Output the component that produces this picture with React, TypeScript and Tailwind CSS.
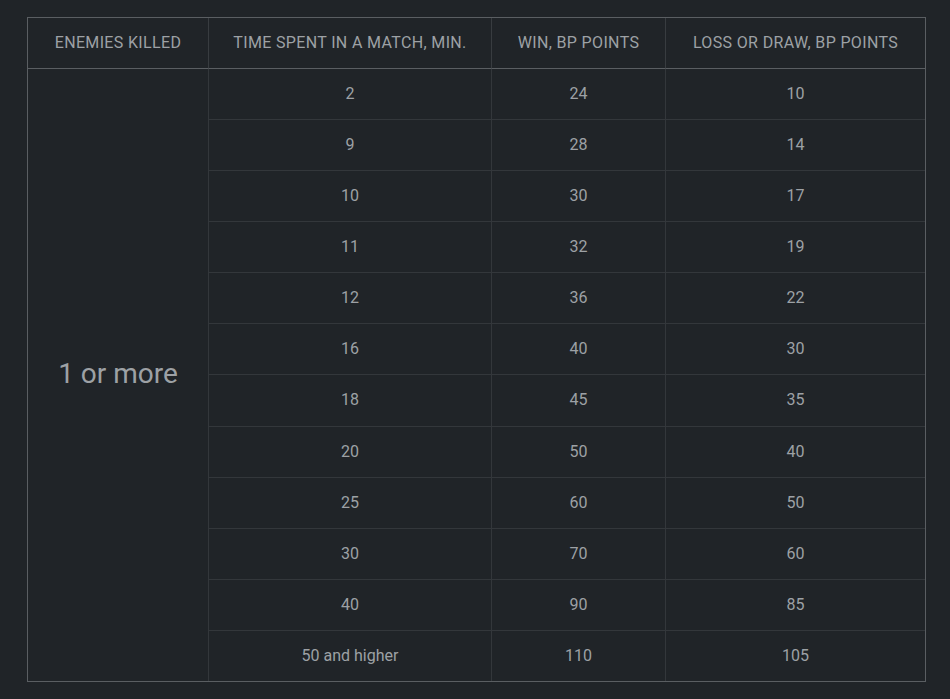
import React from "react";

const rows: [string, string, string][] = [
  ["2", "24", "10"],
  ["9", "28", "14"],
  ["10", "30", "17"],
  ["11", "32", "19"],
  ["12", "36", "22"],
  ["16", "40", "30"],
  ["18", "45", "35"],
  ["20", "50", "40"],
  ["25", "60", "50"],
  ["30", "70", "60"],
  ["40", "90", "85"],
  ["50 and higher", "110", "105"],
];

export default function App() {
  return (
    <div
      className="w-[950px] h-[699px] bg-[#202428] pt-[17px] pl-[27px] text-[#9da1a5]"
      style={{ fontFamily: "Roboto, 'Liberation Sans', sans-serif" }}
    >
      <div className="w-[899px] border border-[#5a5e62]">
        <div className="grid grid-cols-[180px_283px_174px_260px]">
          {[
            "ENEMIES KILLED",
            "TIME SPENT IN A MATCH, MIN.",
            "WIN, BP POINTS",
            "LOSS OR DRAW, BP POINTS",
          ].map((h, i) => (
            <div
              key={h}
              className={`h-[51px] flex items-center justify-center text-[16px] tracking-[0.35px] border-b border-[#5a5e62] ${
                i > 0 ? "border-l border-l-[#383c40]" : ""
              }`}
            >
              {h}
            </div>
          ))}
          <div className="row-span-12 flex items-center justify-center pb-[2px] text-[28px]">
            1 or more
          </div>
          {rows.map((r, ri) =>
            r.map((c, ci) => (
              <div
                key={`${ri}-${ci}`}
                className={`flex items-center justify-center text-[16px] border-l border-[#33373b] ${
                  ri === rows.length - 1
                    ? "h-[50px]"
                    : ri === 6
                    ? "h-[52px] pb-[2px] border-b"
                    : "h-[51px] border-b"
                }`}
              >
                {c}
              </div>
            ))
          )}
        </div>
      </div>
    </div>
  );
}
